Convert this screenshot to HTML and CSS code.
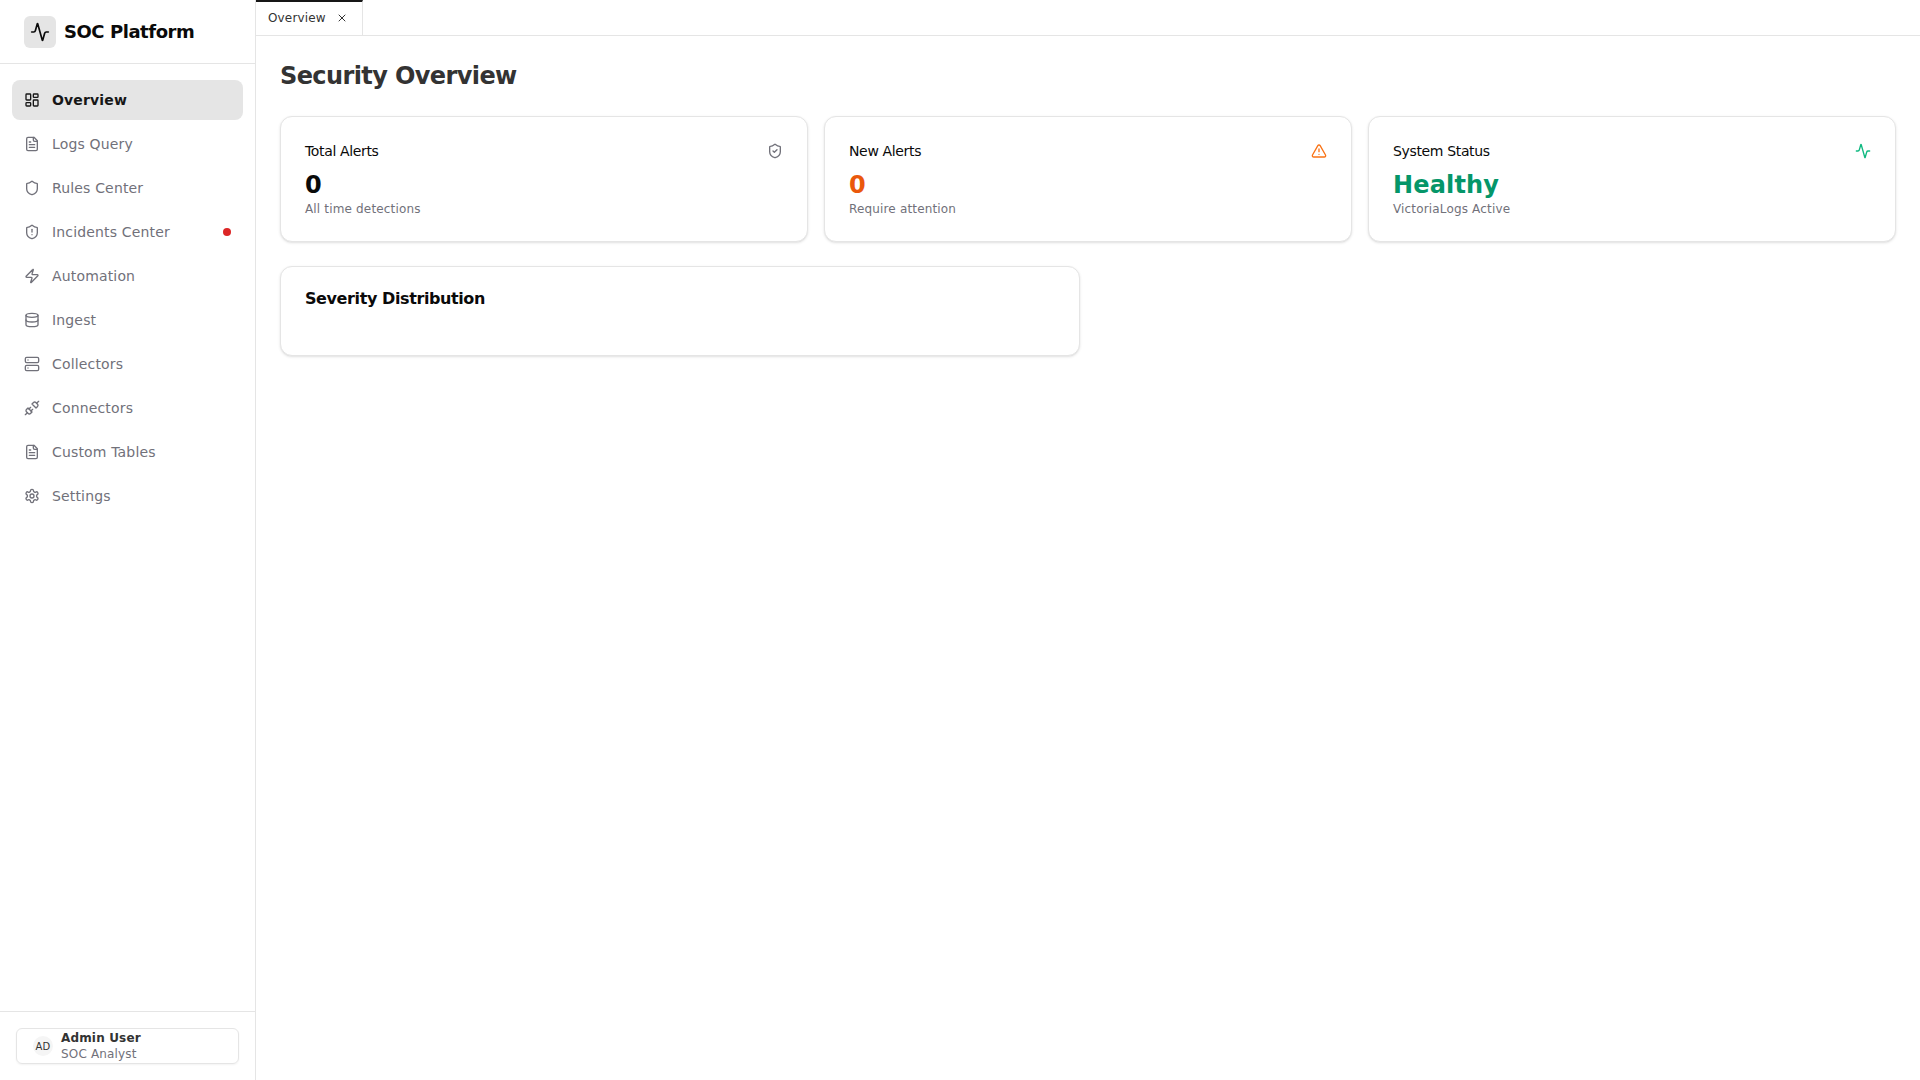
FILE: index.html
```html
<!DOCTYPE html>
<html lang="en">
<head>
<meta charset="utf-8">
<title>SOC Platform</title>
<link rel="stylesheet" href="styles.css">
</head>
<body>
<svg class="defs" width="0" height="0">
  <symbol id="i-activity" viewBox="0 0 24 24"><path d="M22 12h-2.48a2 2 0 0 0-1.93 1.46l-2.35 8.36a.25.25 0 0 1-.48 0L9.24 2.18a.25.25 0 0 0-.48 0l-2.35 8.36A2 2 0 0 1 4.49 12H2"/></symbol>
  <symbol id="i-dashboard" viewBox="0 0 24 24"><rect x="3" y="3" width="7" height="9" rx="1"/><rect x="14" y="3" width="7" height="5" rx="1"/><rect x="14" y="12" width="7" height="9" rx="1"/><rect x="3" y="16" width="7" height="5" rx="1"/></symbol>
  <symbol id="i-file" viewBox="0 0 24 24"><path d="M15 2H6a2 2 0 0 0-2 2v16a2 2 0 0 0 2 2h12a2 2 0 0 0 2-2V7Z"/><path d="M14 2v4a2 2 0 0 0 2 2h4"/><path d="M10 9H8"/><path d="M16 13H8"/><path d="M16 17H8"/></symbol>
  <symbol id="i-shield" viewBox="0 0 24 24"><path d="M20 13c0 5-3.5 7.5-7.66 8.95a1 1 0 0 1-.67-.01C7.5 20.5 4 18 4 13V6a1 1 0 0 1 1-1c2 0 4.5-1.2 6.24-2.72a1.17 1.17 0 0 1 1.52 0C14.51 3.81 17 5 19 5a1 1 0 0 1 1 1z"/></symbol>
  <symbol id="i-shield-alert" viewBox="0 0 24 24"><path d="M20 13c0 5-3.5 7.5-7.66 8.95a1 1 0 0 1-.67-.01C7.5 20.5 4 18 4 13V6a1 1 0 0 1 1-1c2 0 4.5-1.2 6.24-2.72a1.17 1.17 0 0 1 1.52 0C14.51 3.81 17 5 19 5a1 1 0 0 1 1 1z"/><path d="M12 8v4"/><path d="M12 16h.01"/></symbol>
  <symbol id="i-shield-check" viewBox="0 0 24 24"><path d="M20 13c0 5-3.5 7.5-7.66 8.95a1 1 0 0 1-.67-.01C7.5 20.5 4 18 4 13V6a1 1 0 0 1 1-1c2 0 4.5-1.2 6.24-2.72a1.17 1.17 0 0 1 1.52 0C14.51 3.81 17 5 19 5a1 1 0 0 1 1 1z"/><path d="m9 12 2 2 4-4"/></symbol>
  <symbol id="i-zap" viewBox="0 0 24 24"><path d="M4 14a1 1 0 0 1-.78-1.63l9.9-10.2a.5.5 0 0 1 .86.46l-1.92 6.02A1 1 0 0 0 13 10h7a1 1 0 0 1 .78 1.63l-9.9 10.2a.5.5 0 0 1-.86-.46l1.92-6.02A1 1 0 0 0 11 14z"/></symbol>
  <symbol id="i-database" viewBox="0 0 24 24"><ellipse cx="12" cy="5" rx="9" ry="3"/><path d="M3 5V19A9 3 0 0 0 21 19V5"/><path d="M3 12A9 3 0 0 0 21 12"/></symbol>
  <symbol id="i-server" viewBox="0 0 24 24"><rect x="2" y="2" width="20" height="8" rx="2"/><rect x="2" y="14" width="20" height="8" rx="2"/><path d="M6 6h.01"/><path d="M6 18h.01"/></symbol>
  <symbol id="i-unplug" viewBox="0 0 24 24"><path d="m19 5 3-3"/><path d="m2 22 3-3"/><path d="M6.3 20.3a2.4 2.4 0 0 0 3.4 0L12 18l-6-6-2.3 2.3a2.4 2.4 0 0 0 0 3.4Z"/><path d="M7.5 13.5 10 11"/><path d="M10.5 16.5 13 14"/><path d="m12 6 6 6 2.3-2.3a2.4 2.4 0 0 0 0-3.4l-2.6-2.6a2.4 2.4 0 0 0-3.4 0Z"/></symbol>
  <symbol id="i-settings" viewBox="0 0 24 24"><path d="M12.22 2h-.44a2 2 0 0 0-2 2v.18a2 2 0 0 1-1 1.73l-.43.25a2 2 0 0 1-2 0l-.15-.08a2 2 0 0 0-2.73.73l-.22.38a2 2 0 0 0 .73 2.73l.15.1a2 2 0 0 1 1 1.72v.51a2 2 0 0 1-1 1.74l-.15.09a2 2 0 0 0-.73 2.73l.22.38a2 2 0 0 0 2.73.73l.15-.08a2 2 0 0 1 2 0l.43.25a2 2 0 0 1 1 1.73V20a2 2 0 0 0 2 2h.44a2 2 0 0 0 2-2v-.18a2 2 0 0 1 1-1.73l.43-.25a2 2 0 0 1 2 0l.15.08a2 2 0 0 0 2.73-.73l.22-.39a2 2 0 0 0-.73-2.73l-.15-.08a2 2 0 0 1-1-1.74v-.5a2 2 0 0 1 1-1.74l.15-.09a2 2 0 0 0 .73-2.73l-.22-.38a2 2 0 0 0-2.73-.73l-.15.08a2 2 0 0 1-2 0l-.43-.25a2 2 0 0 1-1-1.73V4a2 2 0 0 0-2-2z"/><circle cx="12" cy="12" r="3"/></symbol>
  <symbol id="i-alert" viewBox="0 0 24 24"><path d="m21.73 18-8-14a2 2 0 0 0-3.48 0l-8 14A2 2 0 0 0 4 21h16a2 2 0 0 0 1.73-3"/><path d="M12 9v4"/><path d="M12 17h.01"/></symbol>
  <symbol id="i-x" viewBox="0 0 24 24"><path d="M18 6 6 18"/><path d="m6 6 12 12"/></symbol>
</svg>
<div class="app">
  <aside class="sidebar">
    <div class="brand">
      <span class="brand-mark"><svg class="icon icon-20"><use href="#i-activity"/></svg></span>
      <span class="brand-name">SOC Platform</span>
    </div>
    <nav class="nav">
      <a class="nav-item active"><svg class="icon"><use href="#i-dashboard"/></svg><span>Overview</span></a>
      <a class="nav-item"><svg class="icon"><use href="#i-file"/></svg><span>Logs Query</span></a>
      <a class="nav-item"><svg class="icon"><use href="#i-shield"/></svg><span>Rules Center</span></a>
      <a class="nav-item"><svg class="icon"><use href="#i-shield-alert"/></svg><span>Incidents Center</span><i class="dot"></i></a>
      <a class="nav-item"><svg class="icon"><use href="#i-zap"/></svg><span>Automation</span></a>
      <a class="nav-item"><svg class="icon"><use href="#i-database"/></svg><span>Ingest</span></a>
      <a class="nav-item"><svg class="icon"><use href="#i-server"/></svg><span>Collectors</span></a>
      <a class="nav-item"><svg class="icon"><use href="#i-unplug"/></svg><span>Connectors</span></a>
      <a class="nav-item"><svg class="icon"><use href="#i-file"/></svg><span>Custom Tables</span></a>
      <a class="nav-item"><svg class="icon"><use href="#i-settings"/></svg><span>Settings</span></a>
    </nav>
    <div class="sidebar-foot">
      <div class="user">
        <span class="avatar">AD</span>
        <span class="user-text">
          <span class="user-name">Admin User</span>
          <span class="user-role">SOC Analyst</span>
        </span>
      </div>
    </div>
  </aside>
  <main class="main">
    <div class="tabs">
      <div class="tab"><span>Overview</span><svg class="icon icon-12"><use href="#i-x"/></svg></div>
    </div>
    <div class="content">
      <h1 class="title">Security Overview</h1>
      <section class="stats">
        <article class="card stat">
          <div class="stat-head"><span>Total Alerts</span><svg class="icon icon-muted"><use href="#i-shield-check"/></svg></div>
          <div class="stat-value">0</div>
          <div class="stat-note">All time detections</div>
        </article>
        <article class="card stat">
          <div class="stat-head"><span>New Alerts</span><svg class="icon icon-orange"><use href="#i-alert"/></svg></div>
          <div class="stat-value orange">0</div>
          <div class="stat-note">Require attention</div>
        </article>
        <article class="card stat">
          <div class="stat-head"><span>System Status</span><svg class="icon icon-green"><use href="#i-activity"/></svg></div>
          <div class="stat-value green">Healthy</div>
          <div class="stat-note">VictoriaLogs Active</div>
        </article>
      </section>
      <section class="charts">
        <article class="card chart"><h2 class="chart-title">Severity Distribution</h2></article>
      </section>
    </div>
  </main>
</div>
</body>
</html>
```
FILE: styles.css
```css
* { box-sizing: border-box; }
html, body { height: 100%; margin: 0; }
body { font-family: "DejaVu Sans", sans-serif; background: #fff; color: #0a0a0a; letter-spacing: .01em; }
.defs { display: block; width: 0; height: 0; position: absolute; }
.app { display: flex; height: 100vh; overflow: hidden; }

.icon { width: 16px; height: 16px; flex: none; fill: none; stroke: currentColor; stroke-width: 2; stroke-linecap: round; stroke-linejoin: round; }
.icon-20 { width: 20px; height: 20px; }
.icon-12 { width: 12px; height: 12px; }
.icon-muted { color: #71717a; }
.icon-orange { color: #f97316; }
.icon-green { color: #10b981; }

.sidebar { width: 256px; flex: none; display: flex; flex-direction: column; border-right: 1px solid #e5e5e5; }
.brand { height: 64px; flex: none; display: flex; align-items: center; gap: 8px; padding: 0 24px; border-bottom: 1px solid #e5e5e5; }
.brand-mark { width: 32px; height: 32px; border-radius: 6px; background: #e5e5e5; display: flex; align-items: center; justify-content: center; }
.brand-name { font-size: 18px; line-height: 28px; font-weight: 700; letter-spacing: -.025em; padding-top: 1px; }
.nav { flex: 1; display: flex; flex-direction: column; gap: 4px; padding: 16px 12px; }
.nav-item { height: 40px; display: flex; align-items: center; gap: 12px; padding: 0 12px; border-radius: 8px; font-size: 14px; font-weight: 500; color: #71717a; }
.nav-item.active { background: #e5e5e5; color: #171717; font-weight: 700; }
.dot { width: 8px; height: 8px; border-radius: 50%; background: #dc2626; margin-left: auto; }
.sidebar-foot { flex: none; border-top: 1px solid #e5e5e5; padding: 16px; height: 69px; }
.user { height: 36px; display: flex; align-items: center; gap: 8px; padding: 0 16px; border: 1px solid #e5e5e5; border-radius: 6px; box-shadow: 0 1px 2px rgba(0,0,0,.05); }
.avatar { width: 20px; height: 20px; border-radius: 50%; background: #f5f5f5; font-size: 10px; color: #333; display: flex; align-items: center; justify-content: center; flex: none; }
.user-text { display: flex; flex-direction: column; }
.user-name { font-size: 12px; line-height: 16px; font-weight: 700; color: #333; }
.user-role { font-size: 12px; line-height: 16px; color: #71717a; }

.main { flex: 1; min-width: 0; display: flex; flex-direction: column; }
.tabs { height: 36px; flex: none; display: flex; border-bottom: 1px solid #e5e5e5; }
.tab { display: flex; align-items: center; gap: 10px; height: 35px; padding: 0 14px 2px 12px; border-top: 2px solid #171717; border-right: 1px solid #e5e5e5; font-size: 12px; color: #333; }
.content { padding: 24px; flex: 1; }
.title { margin: 0 0 24px; font-size: 24px; line-height: 32px; font-weight: 700; color: #333; letter-spacing: -.025em; }
.card { background: #fff; border: 1px solid #e5e5e5; border-radius: 12px; box-shadow: 0 1px 3px rgba(0,0,0,.1), 0 1px 2px -1px rgba(0,0,0,.1); }
.stats { display: grid; grid-template-columns: repeat(3, 1fr); gap: 16px; margin-bottom: 24px; }
.stat { padding: 24px; height: 126px; }
.stat-head { display: flex; justify-content: space-between; align-items: center; height: 20px; font-size: 14px; letter-spacing: -.025em; }
.stat-value { margin-top: 8px; font-size: 24px; line-height: 32px; font-weight: 700; }
.stat-value.orange { color: #ea580c; }
.stat-value.green { color: #059669; }
.stat-note { font-size: 12px; line-height: 16px; color: #71717a; }
.charts { display: grid; grid-template-columns: repeat(2, 1fr); gap: 16px; }
.chart { padding: 24px; height: 90px; }
.chart-title { margin: 0; font-size: 16px; line-height: 16px; font-weight: 700; letter-spacing: -.025em; }
```
